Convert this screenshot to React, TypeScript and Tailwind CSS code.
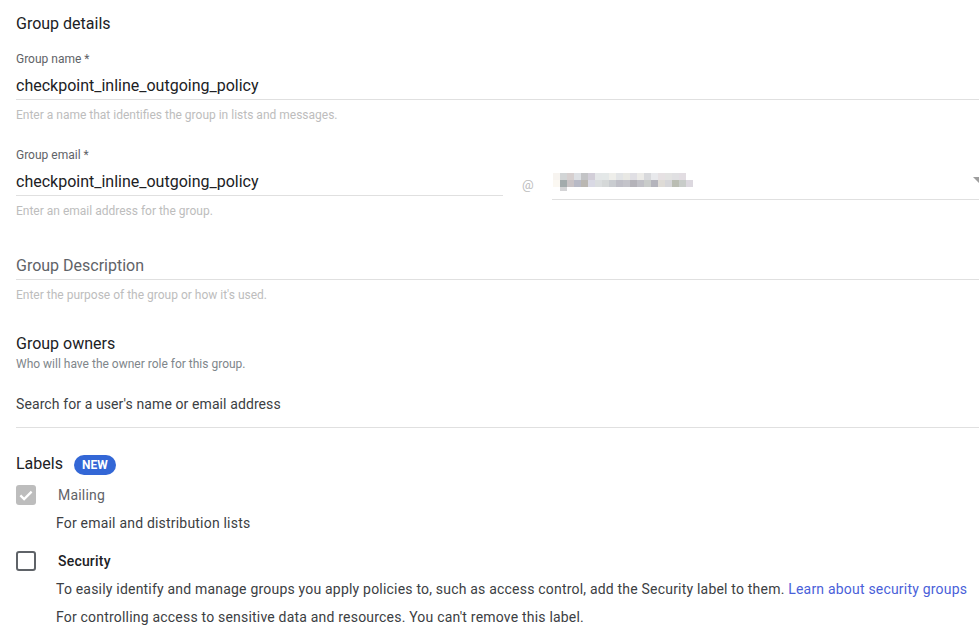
import React from 'react';

const font = { fontFamily: 'Roboto, "Noto Sans", sans-serif' };

// pixelated domain value in the select (obscured)
const mosaic: string[][] = [
  ['#f7f4f0', '#d2d5d6', '#d6cfcf', '#dde0e4', '#c3c4c6', '#d2ced8', '#e4e7e8', '#e4e8e8', '#eeeeea', '#e2e4e6', '#e8e8e4', '#e0dfe4', '#ecebe8', '#d8d9dc', '#e8e9ec', '#e6e1e3', '#e3e3e2', '#e0e0e2', '#e2dde2', '#ffffff'],
  ['#fbf8f2', '#a3abac', '#c9c3c5', '#b8bac6', '#bab7b2', '#d9d9e4', '#dbdedf', '#d5d8d8', '#c9ccd0', '#bfbfc7', '#c4c4ca', '#b4b3b9', '#c0c0c6', '#c9ccca', '#b4b4bc', '#dedbd6', '#d6d6d9', '#babdb3', '#c8ccc9', '#dcd8df'],
];

const Hint: React.FC<{ children: React.ReactNode }> = ({ children }) => (
  <p className="mt-[7px] text-[12px] leading-4 text-[#bdbdbd]">{children}</p>
);

const Label: React.FC<{ children: React.ReactNode }> = ({ children }) => (
  <p className="text-[12px] leading-4 text-[#5f6368]">{children}</p>
);

const App: React.FC = () => {
  return (
    <div className="min-h-screen bg-white pl-4 pt-[12px] text-[#202124]" style={font}>
      <h2 className="text-[16px] leading-6">Group details</h2>

      {/* Group name */}
      <div className="mt-[15px]">
        <Label>Group name *</Label>
        <div className="mt-[7px] border-b border-[#e0e0e0] pb-[1px] text-[16px] leading-6">
          checkpoint_inline_outgoing_policy
        </div>
        <Hint>Enter a name that identifies the group in lists and messages.</Hint>
      </div>

      {/* Group email */}
      <div className="mt-6">
        <Label>Group email *</Label>
        <div className="flex items-start">
          <div className="w-[487px] shrink-0">
            <div className="mt-[7px] border-b border-[#e0e0e0] pb-[1px] text-[16px] leading-6">
              checkpoint_inline_outgoing_policy
            </div>
            <Hint>Enter an email address for the group.</Hint>
          </div>
          <span className="ml-[19px] mt-[14px] w-[30px] text-[13px] leading-4 text-[#bdbdbd]">@</span>
          <div className="relative mt-[2px] h-[35px] flex-1 border-b border-[#e0e0e0]">
            <div className="ml-[1px] mt-[8px] flex flex-col">
              {mosaic.map((row, r) => (
                <div key={r} className="flex">
                  {row.map((c, i) => (
                    <div key={i} className="h-[7px] w-[7px]" style={{ backgroundColor: c }} />
                  ))}
                </div>
              ))}
              <div className="ml-[7px] h-[4px] w-[7px] bg-[#d4d4d6]" />
            </div>
            <div className="absolute right-0 top-[12px] h-0 w-0 border-l-[6px] border-t-[6px] border-l-transparent border-t-[#9e9e9e]" />
          </div>
        </div>
      </div>

      {/* Description */}
      <div className="mt-[34px]">
        <div className="border-b border-[#e0e0e0] pt-[1px] pb-[1px] text-[16px] leading-6 text-[#5f6368]">
          Group Description
        </div>
        <Hint>Enter the purpose of the group or how it's used.</Hint>
      </div>

      {/* Owners */}
      <div className="mt-[29px]">
        <h3 className="text-[16px] leading-6">Group owners</h3>
        <p className="text-[12px] leading-4 text-[#80868b]">Who will have the owner role for this group.</p>
        <div className="mt-[22px] border-b border-[#e0e0e0] pb-[13px] text-[14px] leading-5 tracking-[0.1px] text-[#3c4043]">
          Search for a user's name or email address
        </div>
      </div>

      {/* Labels */}
      <div className="mt-[24px]">
        <div className="flex items-center">
          <h3 className="text-[16px] leading-6">Labels</h3>
          <span className="ml-[11px] mt-[2px] flex h-[20px] w-[42px] items-center justify-center rounded-full bg-[#3367d6] text-[12px] font-bold text-white">
            NEW
          </span>
        </div>

        <div className="mt-[9px] flex items-center">
          <div className="flex h-[20px] w-[20px] items-center justify-center rounded-[3px] bg-[#bdbdbd]">
            <svg viewBox="0 0 24 24" className="h-[18px] w-[18px]" fill="none" stroke="white" strokeWidth="3">
              <path d="M4.5 12.5l5 5 10-10" />
            </svg>
          </div>
          <span className="ml-[22px] text-[14px] leading-5 tracking-[0.2px] text-[#5f6368]">Mailing</span>
        </div>
        <p className="ml-[40px] mt-[8px] text-[14px] leading-5 tracking-[0.2px] text-[#3c4043]">For email and distribution lists</p>

        <div className="mt-[18px] flex items-center">
          <div className="h-[20px] w-[20px] rounded-[3px] border-2 border-[#5f6368]" />
          <span className="ml-[22px] text-[14px] font-medium leading-5 tracking-[0.2px] text-[#202124]">Security</span>
        </div>
        <div className="ml-[40px] mt-[4px] text-[14px] leading-7 tracking-[0.2px] text-[#3c4043]">
          <p>
            To easily identify and manage groups you apply policies to, such as access control, add the Security label to them.{' '}
            <a className="text-[#4a5fd9]">Learn about security groups</a>
          </p>
          <p>For controlling access to sensitive data and resources. You can't remove this label.</p>
        </div>
      </div>
    </div>
  );
};

export default App;
